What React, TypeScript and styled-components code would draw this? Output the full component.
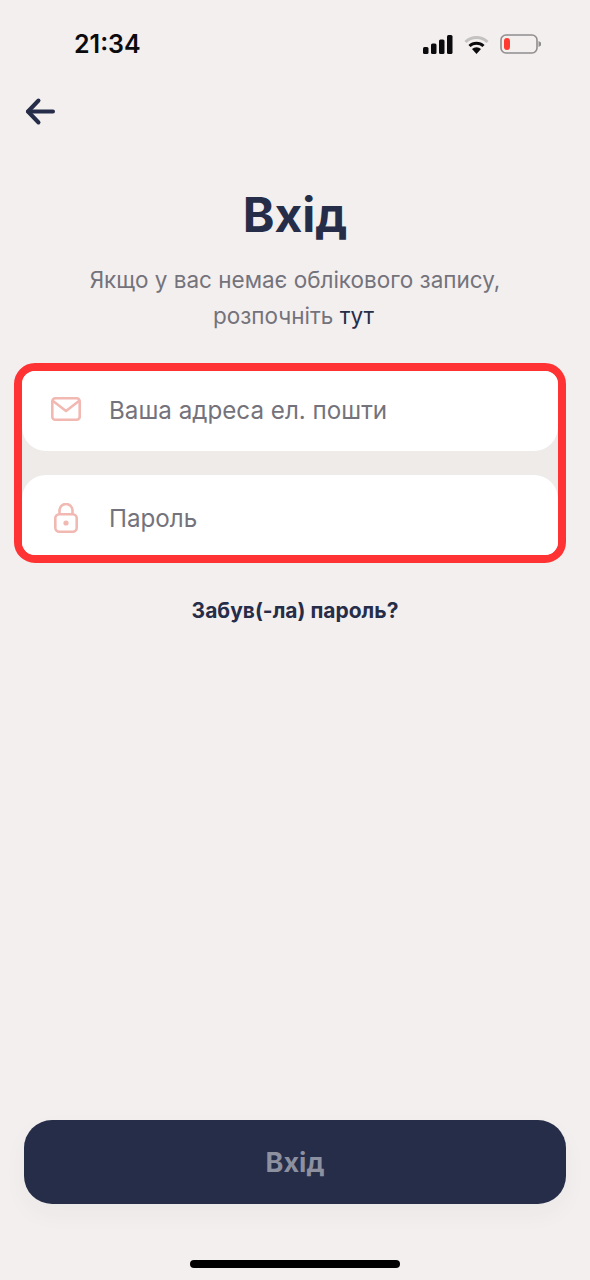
import React from 'react'
import styled, {createGlobalStyle} from 'styled-components'

const navy = '#262d49'

const GlobalStyle = createGlobalStyle`
  html, body {
    margin: 0;
    padding: 0;
    background: #f3efee;
  }
  * {
    box-sizing: border-box;
  }
`

const Screen = styled.div`
  width: 590px;
  height: 1280px;
  display: flex;
  flex-direction: column;
  background: #f3efee;
  font-family: Inter, "Liberation Sans", sans-serif;
`

const StatusBar = styled.div`
  display: flex;
  align-items: center;
  justify-content: space-between;
  height: 32px;
  margin-top: 28px;
  padding: 0 49px 0 74px;
`

const Time = styled.span`
  font-size: 25px;
  font-weight: 600;
  color: #0b0b0d;
`

const StatusIcons = styled.div`
  display: flex;
  align-items: center;
  gap: 11px;
`

const BackButton = styled.div`
  display: flex;
  height: 30px;
  margin: 37px 0 0 25px;
`

const Title = styled.h1`
  margin: 59px 0 0;
  font-size: 48px;
  line-height: 58px;
  font-weight: 700;
  text-align: center;
  color: ${navy};
`

const Subtitle = styled.p`
  margin: 18px 0 0;
  font-size: 22.5px;
  line-height: 36px;
  text-align: center;
  color: #74737c;

  b {
    font-weight: 400;
    color: ${navy};
  }
`

const SubtitleLast = styled.span`
  padding-right: 3px;
`

const FieldsFrame = styled.div`
  display: flex;
  flex-direction: column;
  gap: 24px;
  margin: 29px 24px 0 14px;
  border: 8px solid #ff3333;
  border-radius: 21px;
  background: #eeebe9;
  overflow: hidden;
`

const Field = styled.div<{ last?: boolean }>`
  display: flex;
  align-items: center;
  height: 80px;
  padding: ${props => props.last ? '5px 0 0 32px' : '0 0 4px 29px'};
  gap: ${props => props.last ? '31px' : '28px'};
  background: #ffffff;
  border-radius: ${props => props.last ? '24px 24px 0 0' : '0 0 24px 24px'};
  font-size: 24.2px;
  color: #74737c;
`

const Placeholder = styled.span`
  padding-top: 2px;
`

const Forgot = styled.div`
  margin-top: 36px;
  font-size: 21px;
  line-height: 24px;
  font-weight: 700;
  text-align: center;
  color: ${navy};
`

const Spacer = styled.div`
  flex: 1;
`

const SubmitButton = styled.div`
  display: flex;
  align-items: center;
  justify-content: center;
  height: 84px;
  margin: 0 24px;
  border-radius: 28px;
  background: ${navy};
  box-shadow: 0 10px 24px rgba(38, 45, 73, 0.04);
  font-size: 27px;
  font-weight: 700;
  color: #8d909f;
`

const HomeBar = styled.div`
  width: 210px;
  height: 8px;
  margin: 56px auto 12px;
  border-radius: 4px;
  background: #000000;
`

export default function App() {
  return (
    <Screen>
      <GlobalStyle />
      <StatusBar>
        <Time>21:34</Time>
        <StatusIcons>
          <svg width="30" height="19" viewBox="0 0 30 19">
            <rect x="0" y="12" width="5.5" height="7" rx="1.5" fill="#0b0b0d" />
            <rect x="8" y="8.5" width="5.5" height="10.5" rx="1.5" fill="#0b0b0d" />
            <rect x="16" y="4.5" width="5.5" height="14.5" rx="1.5" fill="#0b0b0d" />
            <rect x="24" y="0" width="5.5" height="19" rx="1.5" fill="#0b0b0d" />
          </svg>
          <svg width="25" height="19" viewBox="0 0 25 19" fill="none" strokeLinecap="butt">
            <path d="M1.5 7 A15.5 15.5 0 0 1 23.5 7" stroke="#c4c2c1" strokeWidth="3" />
            <path d="M5.5 11 A10 10 0 0 1 19.5 11" stroke="#0b0b0d" strokeWidth="3" />
            <path d="M12.5 19 L8 14 A6.5 6.5 0 0 1 17 14 Z" fill="#0b0b0d" />
          </svg>
          <svg width="41" height="20" viewBox="0 0 41 20" fill="none">
            <rect x="1" y="1" width="36" height="18" rx="5" stroke="#8f8d8d" strokeWidth="1.6" />
            <rect x="4" y="4" width="6" height="12" rx="3" fill="#ff3b30" />
            <path d="M38.5 7 L41 8.5 V11.5 L38.5 13 Z" fill="#8f8d8d" />
          </svg>
        </StatusIcons>
      </StatusBar>

      <BackButton>
        <svg width="30" height="30" viewBox="0 0 30 30" fill="none" stroke={navy} strokeWidth="4" strokeLinecap="round" strokeLinejoin="round">
          <path d="M3 14.5 H28" />
          <path d="M13.5 3.5 L3 14.5 L13.5 25.5" />
        </svg>
      </BackButton>

      <Title>Вхід</Title>
      <Subtitle>
        Якщо у вас немає облікового запису,
        <br />
        <SubtitleLast>розпочніть <b>тут</b></SubtitleLast>
      </Subtitle>

      <FieldsFrame>
        <Field>
          <svg width="30" height="24" viewBox="0 0 30 24" fill="none" stroke="#f2b8b2" strokeWidth="2.6" strokeLinejoin="round" strokeLinecap="round">
            <rect x="1.3" y="1.3" width="27.4" height="21.4" rx="3" />
            <path d="M2 4 L15 14 L28 4" />
          </svg>
          <Placeholder>Ваша адреса ел. пошти</Placeholder>
        </Field>
        <Field last>
          <svg width="24" height="30" viewBox="0 0 24 30" fill="none" stroke="#f2b8b2" strokeWidth="2.6">
            <rect x="1.3" y="11.3" width="21.4" height="17.4" rx="4" />
            <path d="M5.5 11 V7.5 A6.5 6.5 0 0 1 18.5 7.5 V11" />
            <circle cx="12" cy="20" r="2.6" fill="#f2b8b2" stroke="none" />
          </svg>
          <Placeholder>Пароль</Placeholder>
        </Field>
      </FieldsFrame>

      <Forgot>Забув(-ла) пароль?</Forgot>
      <Spacer />
      <SubmitButton>Вхід</SubmitButton>
      <HomeBar />
    </Screen>
  )
}
